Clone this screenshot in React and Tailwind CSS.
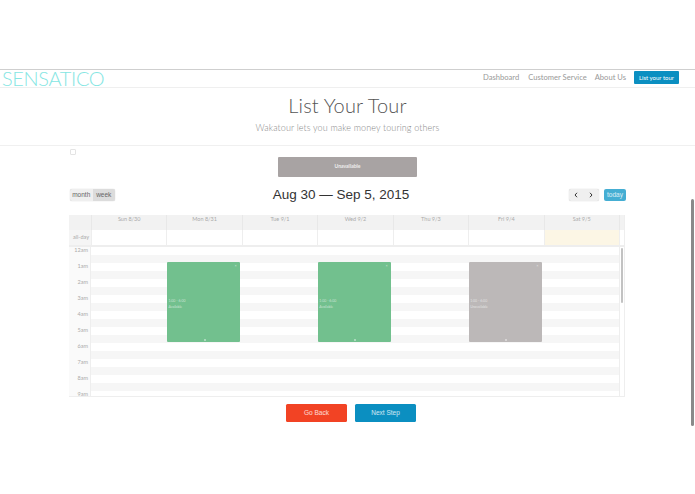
import React from 'react';

const days = ['Sun 8/30', 'Mon 8/31', 'Tue 9/1', 'Wed 9/2', 'Thu 9/3', 'Fri 9/4', 'Sat 9/5'];
const hours = ['12am', '1am', '2am', '3am', '4am', '5am', '6am', '7am', '8am', '9am'];
const gridCols = 'grid grid-cols-[22px_repeat(7,minmax(0,1fr))_5px]';

const Event = ({ label, color }) => (
  <div className={`relative ml-[1px] mr-[2px] mt-[15px] h-[80px] rounded-[1px] ${color} text-[3.5px] leading-[5.5px] text-white/60`}>
    <span className="absolute right-[3px] top-[1px] text-[4px]">×</span>
    <div className="absolute left-[1px] top-[37px]">
      <div>1:00 - 6:00</div>
      <div>{label}</div>
    </div>
    <span className="absolute bottom-[1px] left-1/2 h-[2px] w-[2px] bg-white/40" />
  </div>
);

const App = () => {
  return (
    <div className="relative h-[494px] w-[695px] overflow-hidden bg-white pt-[69px] font-['Lato',sans-serif]">
      {/* Nav */}
      <nav className="flex h-[19px] items-center justify-between border-y border-t-[#cfcfcf] border-b-[#efefef] pb-[2px] pl-[2px] pr-[16px]">
        <span className="text-[20px] font-light leading-none tracking-[-0.35px] text-[#86e6e3]">SENSATICO</span>
        <div className="flex items-center text-[7.6px] text-[#999]">
          <a className="mr-[9px]">Dashboard</a>
          <a className="mr-[8px]">Customer Service</a>
          <a className="mr-[8px]">About Us</a>
          <button className="h-[13px] w-[45px] rounded-[1px] bg-[#0b8fc1] text-[6px] text-white">List your tour</button>
        </div>
      </nav>

      {/* Heading */}
      <header className="h-[58px] border-b border-[#f0f0f0] pt-[5px] text-center">
        <h1 className="text-[20px] font-light leading-[24px] tracking-[0.15px] text-[#555]">List Your Tour</h1>
        <p className="mt-[5px] text-[9px] font-light leading-[12px] tracking-[0.12px] text-[#888]">Wakatour lets you make money touring others</p>
      </header>

      <main className="relative px-[69px] pt-[11px]">
        <span className="absolute left-[70px] top-[3px] h-[6px] w-[6px] rounded-[1px] border border-[#e4e4e4]" />
        <div className="flex justify-center">
          <button className="h-[20px] w-[139px] rounded-[1px] bg-[#a8a3a3] text-[5px] font-bold text-white/80">Unavailable</button>
        </div>

        {/* Toolbar */}
        <div className="mt-[11px] flex h-[14px] items-center justify-between pl-[1px] font-['Liberation_Sans',sans-serif]">
          <div className="flex h-[12px] w-[45px] rounded-[2px] bg-[#efefef] text-[6.5px] text-[#666] shadow-[0_0_1px_#bbb]">
            <span className="flex-1 text-center leading-[12px]">month</span>
            <span className="flex-1 rounded-r-[2px] bg-[#dcdcdc] text-center leading-[12px]">week</span>
          </div>
          <h2 className="pr-[2px] text-[13.5px] leading-[18px] text-[#333]">Aug 30 — Sep 5, 2015</h2>
          <div className="flex items-center gap-[5px]">
            <div className="flex h-[12px] w-[30px] items-center justify-around rounded-[2px] bg-[#efefef] text-[#333] shadow-[0_0_1px_#bbb]">
              <svg width="4" height="6" viewBox="0 0 4 6" fill="none" stroke="currentColor" strokeWidth="1"><path d="M3 .8 1 3l2 2.2" /></svg>
              <svg width="4" height="6" viewBox="0 0 4 6" fill="none" stroke="currentColor" strokeWidth="1"><path d="M1 .8 3 3 1 5.2" /></svg>
            </div>
            <button className="h-[12px] w-[22px] rounded-[2px] bg-[#45aed3] text-[6.5px] text-white/80">today</button>
          </div>
        </div>

        {/* Calendar */}
        <div className="mt-[13px] w-[556px] border-b border-r border-[#eeeeee] text-[5.5px] text-[#aaa]">
          <div className={`${gridCols} h-[15px] bg-[#f2f2f2] leading-[9px]`}>
            <div />
            {days.map((d) => (
              <div key={d} className="border-l border-[#e8e8e8] text-center">{d}</div>
            ))}
            <div className="border-l border-[#e8e8e8]" />
          </div>
          <div className={`${gridCols} h-[17px] border-b-2 border-[#eeeeee] leading-[15px]`}>
            <div className="bg-[#f5f5f5] pr-[2px] text-right">all-day</div>
            {days.map((d, i) => (
              <div key={d} className={`border-l border-[#eeeeee] ${i === 6 ? 'bg-[#fcf6e5]' : ''}`} />
            ))}
            <div className="border-l border-[#eeeeee]" />
          </div>

          <div className="relative h-[149px] overflow-hidden">
            {hours.map((h) => (
              <div key={h} className="flex h-[16px]">
                <div className="w-[22px] border-r border-[#eeeeee] bg-[#fafafa] pr-[2px] text-right leading-[7px]">{h}</div>
                <div className="flex-1">
                  <div className="h-[8px]" />
                  <div className="h-[8px] bg-[#f6f6f6]" />
                </div>
              </div>
            ))}
            {/* events lie over the time rows */}
            <div className={`${gridCols} absolute inset-0`}>
              <div />
              <div />
              <Event label="Available" color="bg-[#72c08e]" />
              <div />
              <Event label="Available" color="bg-[#72c08e]" />
              <div />
              <Event label="Unavailable" color="bg-[#bcb8b8]" />
              <div />
              <div className="border-l border-[#eeeeee] bg-white">
                <div className="mx-auto mt-[1px] h-[55px] w-[2.5px] rounded-full bg-[#c2c2c2]" />
              </div>
            </div>
          </div>
        </div>

        {/* Buttons */}
        <div className="mt-[7px] flex justify-center gap-[8px] pl-[7px] font-['Liberation_Sans',sans-serif] text-[6.5px] text-white/80">
          <button className="h-[18px] w-[61px] rounded-[1.5px] bg-[#f24324]">Go Back</button>
          <button className="h-[18px] w-[61px] rounded-[1.5px] bg-[#0b8fc1]">Next Step</button>
        </div>
      </main>

      {/* Page scrollbar thumb */}
      <div className="absolute left-[691px] top-[199px] h-[227px] w-[3px] rounded-full bg-[#8a8a8a]" />
    </div>
  );
};

export default App;
